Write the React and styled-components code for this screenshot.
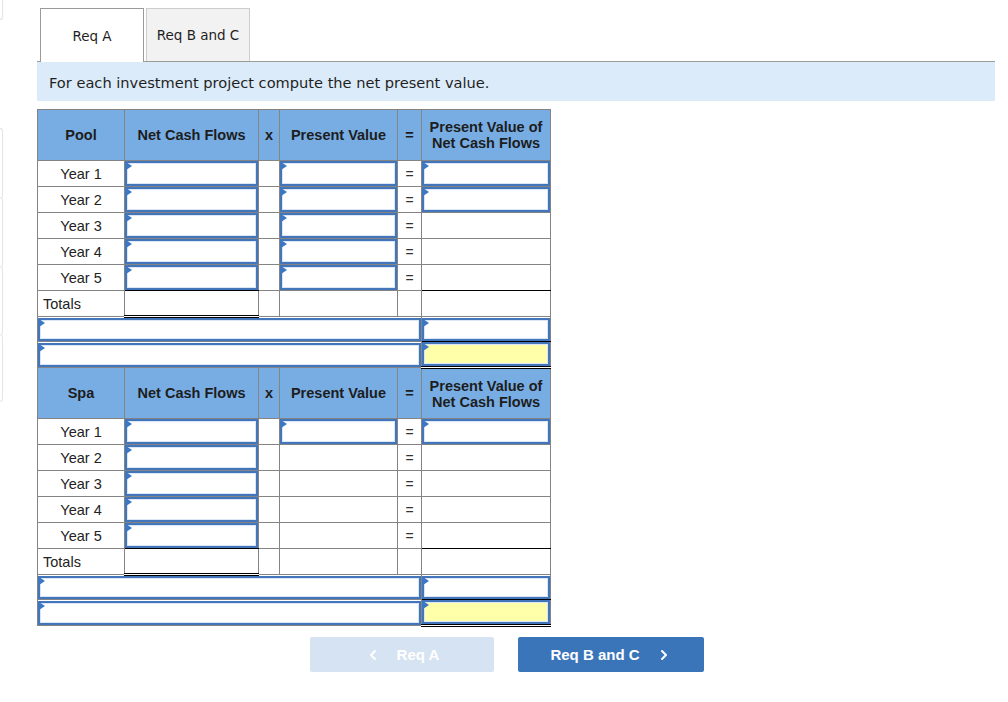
import React from 'react';
import styled, { createGlobalStyle } from 'styled-components';
import { ChevronLeft, ChevronRight } from 'lucide-react';

const GlobalStyle = createGlobalStyle`
  html, body { margin: 0; padding: 0; background: #fff; }
  body { font-family: "Liberation Sans", Arial, sans-serif; color: #222; }
`;

const Page = styled.div`
  display: flex;
  align-items: flex-start;
`;

const Side = styled.div`
  flex: none;
  width: 3px;
  display: flex;
  flex-direction: column;
`;

const SideBox = styled.div`
  box-sizing: border-box;
  height: ${(p) => p.h}px;
  margin-top: ${(p) => p.mt || 0}px;
  border-right: 1px solid #e4e4e4;
  border-bottom: ${(p) => (p.last ? '1px solid #e4e4e4' : 'none')};
  border-top: ${(p) => (p.top ? '1px solid #e4e4e4' : 'none')};
  border-radius: 0 ${(p) => (p.top ? 3 : 0)}px ${(p) => (p.last ? 3 : 0)}px 0;
`;

const Main = styled.div`
  margin-left: 34px;
  width: 958px;
  padding-top: 8px;
`;

const TabRow = styled.div`
  display: flex;
  align-items: flex-end;
  gap: 2px;
  padding-left: 3px;
  border-bottom: 1px solid #9b9b9b;
`;

const Tab = styled.div`
  box-sizing: border-box;
  width: 104px;
  height: ${(p) => (p.active ? 54 : 53)}px;
  margin-bottom: ${(p) => (p.active ? -1 : 0)}px;
  display: flex;
  align-items: center;
  justify-content: center;
  font: 13.5px "DejaVu Sans", Verdana, sans-serif;
  color: #1f1f1f;
  background: ${(p) => (p.active ? '#fff' : '#f2f2f2')};
  border: 1px solid ${(p) => (p.active ? '#9b9b9b' : '#cdcdcd')};
  border-bottom: none;
`;

const Instruction = styled.div`
  height: 39px;
  display: flex;
  align-items: center;
  padding-left: 12px;
  padding-top: 1px;
  box-sizing: border-box;
  background: #dcebf9;
  font: 14.6px "DejaVu Sans", Verdana, sans-serif;
  color: #1f1f1f;
`;

const Grid = styled.table`
  margin-top: 8px;
  border-collapse: collapse;
  table-layout: fixed;
  width: 514px;
`;

const Col = styled.col`
  width: ${(p) => p.w}px;
`;

const HeadCell = styled.th`
  height: ${(p) => p.h || 50}px;
  padding: 0;
  border: 1px solid #848484;
  background: #78ade4;
  font-size: 14.5px;
  font-weight: bold;
  line-height: 16px;
  color: #1d1d1d;
  text-align: center;
`;

const Cell = styled.td`
  height: ${(p) => p.h || 25}px;
  padding: 0;
  padding-left: ${(p) => (p.left ? 5 : 0)}px;
  border: 1px solid #848484;
  border-bottom: ${(p) => p.bb || '1px solid #848484'};
  font-size: 14.5px;
  line-height: 16px;
  color: #222;
  text-align: ${(p) => (p.left ? 'left' : 'center')};
  vertical-align: middle;
`;

const Eq = styled.span`
  font-size: 14px;
  color: #333;
`;

const Field = styled.div`
  position: relative;
  box-sizing: border-box;
  height: ${(p) => p.h || 25}px;
  border: 2px solid #4275b9;
  box-shadow: inset 0 0 0 1px #dae6f5;
  background: ${(p) => (p.yellow ? '#ffffaa' : '#fff')};

  &::before {
    content: '';
    position: absolute;
    left: -1px;
    top: -1px;
    border-left: 6px solid #3a77c6;
    border-top: 4px solid transparent;
    border-bottom: 4px solid transparent;
  }
`;

const Buttons = styled.div`
  display: flex;
  gap: 24px;
  margin-top: 10px;
  padding-left: 273px;
`;

const NavButton = styled.button`
  box-sizing: border-box;
  width: ${(p) => p.w}px;
  height: 35px;
  border: none;
  border-radius: 2px;
  display: flex;
  align-items: center;
  justify-content: center;
  gap: 16px;
  font-family: "Liberation Sans", Arial, sans-serif;
  font-size: 15px;
  font-weight: bold;
  color: #fff;
  background: ${(p) => (p.disabled ? '#d6e3f2' : '#3a75ba')};
  padding: 0;
`;

const sections = [
  { name: 'Pool', headH: 50, pv: [1, 1, 1, 1, 1], pvn: [1, 1, 0, 0, 0] },
  { name: 'Spa', headH: 49, pv: [1, 0, 0, 0, 0], pvn: [1, 0, 0, 0, 0] },
];

const black = '1px solid #000';
const dbl = '3px double #000';

function Section({ name, headH, pv, pvn }) {
  return (
    <tbody>
      <tr>
        <HeadCell h={headH}>{name}</HeadCell>
        <HeadCell h={headH}>Net Cash Flows</HeadCell>
        <HeadCell h={headH}>x</HeadCell>
        <HeadCell h={headH}>Present Value</HeadCell>
        <HeadCell h={headH}>=</HeadCell>
        <HeadCell h={headH}>
          Present Value of
          <br />
          Net Cash Flows
        </HeadCell>
      </tr>
      {pv.map((hasPv, i) => (
        <tr key={i}>
          <Cell>Year {i + 1}</Cell>
          <Cell bb={i === 4 ? black : undefined}>
            <Field />
          </Cell>
          <Cell />
          <Cell>{hasPv ? <Field /> : null}</Cell>
          <Cell>
            <Eq>=</Eq>
          </Cell>
          <Cell bb={i === 4 ? black : undefined}>{pvn[i] ? <Field /> : null}</Cell>
        </tr>
      ))}
      <tr>
        <Cell left h={24}>Totals</Cell>
        <Cell h={24} bb={dbl} />
        <Cell h={24} />
        <Cell h={24} />
        <Cell h={24} />
        <Cell h={24} />
      </tr>
      <tr>
        <Cell colSpan={5} h={23}>
          <Field h={23} />
        </Cell>
        <Cell bb={black} h={23}>
          <Field h={23} />
        </Cell>
      </tr>
      <tr>
        <Cell colSpan={5} h={24}>
          <Field h={24} />
        </Cell>
        <Cell bb={dbl} h={24}>
          <Field h={24} yellow />
        </Cell>
      </tr>
    </tbody>
  );
}

export default function App() {
  return (
    <Page>
      <GlobalStyle />
      <Side>
        <SideBox h={20} last />
        <SideBox h={69} mt={108} top />
        <SideBox h={69} top />
        <SideBox h={68} top />
        <SideBox h={68} top last />
      </Side>
      <Main>
        <TabRow>
          <Tab active>Req A</Tab>
          <Tab>Req B and C</Tab>
        </TabRow>
        <Instruction>For each investment project compute the net present value.</Instruction>
        <Grid>
          <colgroup>
            <Col w={87} />
            <Col w={134} />
            <Col w={21} />
            <Col w={118} />
            <Col w={24} />
            <Col w={129} />
          </colgroup>
          {sections.map((s) => (
            <Section key={s.name} {...s} />
          ))}
        </Grid>
        <Buttons>
          <NavButton w={184} disabled>
            <ChevronLeft size={16} strokeWidth={3} />
            Req A
          </NavButton>
          <NavButton w={186}>
            Req B and C
            <ChevronRight size={16} strokeWidth={3} />
          </NavButton>
        </Buttons>
      </Main>
    </Page>
  );
}
